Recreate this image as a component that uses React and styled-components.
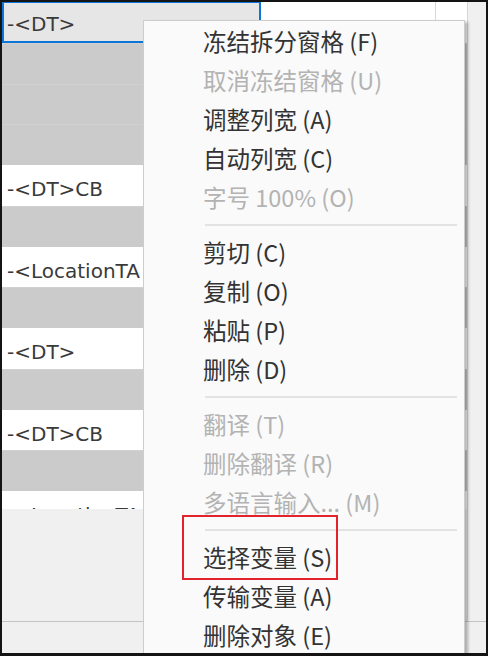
import React from "react";
import styled, { createGlobalStyle } from "styled-components";

const GlobalStyle = createGlobalStyle`
  html, body {
    margin: 0;
    padding: 0;
    background: #ffffff;
  }
`;

const Frame = styled.div`
  position: relative;
  width: 488px;
  height: 656px;
  box-sizing: border-box;
  border: 2px solid #141414;
  border-bottom-width: 3px;
  overflow: hidden;
  display: flex;
  flex-direction: column;
  background: #f0f0f0;
`;

const Upper = styled.div`
  display: flex;
  height: 619px;
`;

const GridArea = styled.div`
  width: 465px;
  display: flex;
  flex-direction: column;
`;

const Viewport = styled.div`
  height: 507px;
  overflow: hidden;
  background: #ffffff;
`;

const Filler = styled.div`
  flex: 1;
  background: #f0f0f0;
`;

const VScroll = styled.div`
  flex: 1;
  background: #f0f0f0;
  border-left: 1px solid #d6d6d6;
`;

const BottomStrip = styled.div`
  flex: 1;
  background: #f0f0f0;
  border-top: 1px solid #c4c4c4;
`;

const HeaderRow = styled.div`
  display: flex;
  height: 40.75px;
  background: #ffffff;
`;

const SelectedCell = styled.div`
  width: 259px;
  box-sizing: border-box;
  background: #e6e6e6;
  border: 2px solid #0b76d6;
  border-top-width: 1px;
  padding: 5px 0 0 3px;
  font-family: "DejaVu Sans", "Noto Sans", sans-serif;
  font-size: 20px;
  line-height: 32px;
  color: #3a3a3a;
  white-space: nowrap;
`;

const BlankCell = styled.div`
  width: 174px;
  border-right: 1px solid #d8d8d8;
`;

const Row = styled.div`
  height: 40.75px;
  box-sizing: border-box;
  background: ${(p) => (p.$shade ? "#cbcbcb" : "#ffffff")};
  border-top: 1px solid ${(p) => (p.$shade ? "#d1d1d1" : "#ffffff")};
  padding: 6px 0 0 5px;
  font-family: "DejaVu Sans", "Noto Sans", sans-serif;
  font-size: 20px;
  line-height: 34px;
  color: #3a3a3a;
  white-space: nowrap;
`;

const Menu = styled.div`
  position: absolute;
  left: 141px;
  top: 18px;
  width: 322px;
  bottom: -4px;
  box-sizing: border-box;
  background: #fafafa;
  border: 1px solid #cdcdcd;
  box-shadow: 3px 2px 3px rgba(0, 0, 0, 0.28);
  padding-top: 0.5px;
`;

const Item = styled.div`
  height: 39px;
  padding-left: 59px;
  font-family: "Noto Sans CJK SC", "Noto Sans", sans-serif;
  font-size: 23.5px;
  line-height: 39px;
  color: ${(p) => (p.$disabled ? "#b3b3b3" : "#333333")};
  white-space: nowrap;
`;

const Separator = styled.div`
  height: 16px;
  display: flex;
  align-items: center;
  margin: 0 7px 0 61px;

  &::after {
    content: "";
    flex: 1;
    height: 2px;
    background: #e3e3e3;
  }
`;

const Highlight = styled.div`
  position: absolute;
  left: 180px;
  top: 513px;
  width: 156px;
  height: 65px;
  box-sizing: border-box;
  border: 2px solid #e3232c;
`;

const rows = [
  { shade: true },
  { shade: true },
  { shade: true },
  { text: "-<DT>CB" },
  { shade: true },
  { text: "-<LocationTA" },
  { shade: true },
  { text: "-<DT>" },
  { shade: true },
  { text: "-<DT>CB" },
  { shade: true },
  { text: "-<LocationTA" },
];

const menu = [
  { label: "冻结拆分窗格 (F)" },
  { label: "取消冻结窗格 (U)", disabled: true },
  { label: "调整列宽 (A)" },
  { label: "自动列宽 (C)" },
  { label: "字号 100% (O)", disabled: true },
  { sep: true },
  { label: "剪切 (C)" },
  { label: "复制 (O)" },
  { label: "粘贴 (P)" },
  { label: "删除 (D)" },
  { sep: true },
  { label: "翻译 (T)", disabled: true },
  { label: "删除翻译 (R)", disabled: true },
  { label: "多语言输入... (M)", disabled: true },
  { sep: true },
  { label: "选择变量 (S)" },
  { label: "传输变量 (A)" },
  { label: "删除对象 (E)" },
];

export default function App() {
  return (
    <>
      <GlobalStyle />
      <Frame>
        <Upper>
          <GridArea>
            <Viewport>
              <HeaderRow>
                <SelectedCell>-&lt;DT&gt;</SelectedCell>
                <BlankCell />
              </HeaderRow>
              {rows.map((r, i) => (
                <Row key={i} $shade={r.shade}>
                  {r.text}
                </Row>
              ))}
            </Viewport>
            <Filler />
          </GridArea>
          <VScroll />
        </Upper>
        <BottomStrip />

        <Menu>
          {menu.map((m, i) =>
            m.sep ? (
              <Separator key={i} />
            ) : (
              <Item key={i} $disabled={m.disabled}>
                {m.label}
              </Item>
            )
          )}
        </Menu>
        <Highlight />
      </Frame>
    </>
  );
}
